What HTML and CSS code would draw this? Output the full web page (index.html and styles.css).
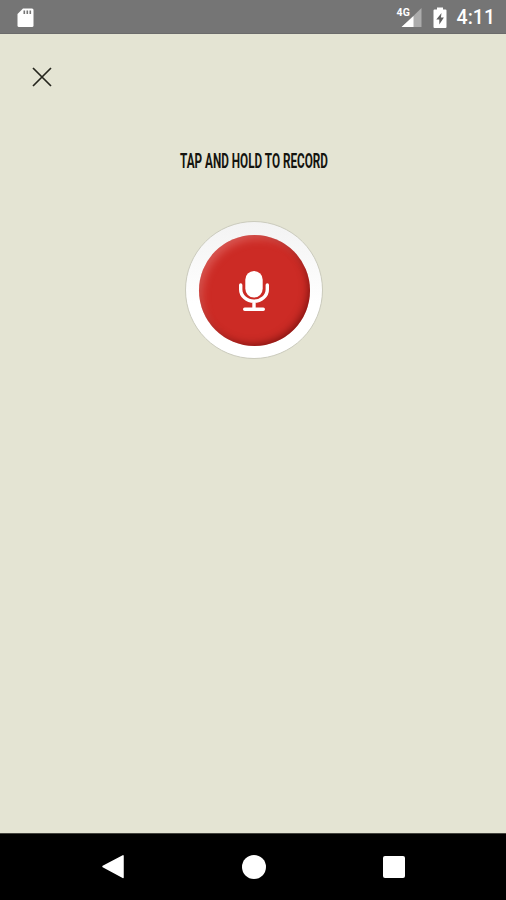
FILE: index.html
```html
<!DOCTYPE html>
<html lang="en">
<head>
<meta charset="UTF-8">
<meta name="viewport" content="width=device-width, initial-scale=1.0">
<title>Record</title>
<link rel="stylesheet" href="styles.css">
</head>
<body>
<div class="phone">
    <header class="status-bar">
        <svg class="sd-card" width="17" height="20" viewBox="0 0 17 20">
            <path fill="#fff" d="M6 0.500h9a1.500 1.500 0 0 1 1.500 1.500v15.500a1.500 1.500 0 0 1-1.500 1.500H2a1.500 1.500 0 0 1-1.500-1.500V6z"/>
            <path stroke="#757575" stroke-width="1.600" d="M7.300 2.500v3.500M10.300 2.500v3.500M13.300 2.500v3.500"/>
        </svg>
        <div class="signal">
            <span class="network">4G</span>
            <svg width="21" height="20" viewBox="0 0 21 20">
                <path fill="#acacac" d="M20.500 0v19H1z"/>
                <path fill="#fff" d="M12.500 8v11H0.500z"/>
            </svg>
        </div>
        <svg class="battery" width="14" height="22" viewBox="0 0 14 22">
            <path fill="#fff" d="M4 0.500h6v2h2.500q1 0 1 1V20q0 1-1 1h-11q-1 0-1-1V3.500q0-1 1-1H4z"/>
            <path fill="#606060" d="M8.500 6L3.300 12.500h3V17.500l4.600-7H7.900z"/>
        </svg>
        <span class="clock">4:11</span>
    </header>

    <main class="screen">
        <button class="close" aria-label="Close">
            <svg width="20" height="20" viewBox="0 0 20 20">
                <path d="M1 1l18 18M19 1L1 19" stroke="#25251d" stroke-width="1.700"/>
            </svg>
        </button>
        <svg class="hint" width="150" height="28" viewBox="0 0 150 28">
            <text x="1" y="20.800" textLength="148" lengthAdjust="spacingAndGlyphs">TAP AND HOLD TO RECORD</text>
        </svg>
        <button class="record" aria-label="Record">
            <span class="record-inner">
                <svg width="32" height="44" viewBox="0 0 32 44">
                    <rect x="7.300" y="2" width="17.400" height="26.500" rx="8.700" fill="#fff"/>
                    <path d="M2.700 16v4.500a13.300 11.800 0 0 0 26.600 0V16M16 33v7M6.700 40.300h18.600" fill="none" stroke="#fff" stroke-width="3.400" stroke-linecap="round"/>
                </svg>
            </span>
        </button>
    </main>

    <nav class="nav-bar">
        <svg width="24" height="26" viewBox="0 0 24 26">
            <path d="M2 12.500L22 1.800v21.600z" fill="#fff" stroke="#fff" stroke-width="1.500" stroke-linejoin="round"/>
        </svg>
        <span class="home"></span>
        <span class="recent"></span>
    </nav>
</div>
</body>
</html>
```

FILE: styles.css
```css
body {
    margin: 0;
    font-family: Roboto, Arial, sans-serif;
}
button {
    padding: 0;
    border: 0;
    background: none;
    cursor: pointer;
}
svg {
    display: block;
}
.phone {
    display: flex;
    flex-direction: column;
    height: 900px;
    background-color: #e4e4d3;
}
.status-bar {
    display: flex;
    align-items: center;
    box-sizing: border-box;
    height: 34px;
    padding: 0 11px 0 17px;
    background-color: #757575;
    border-bottom: 1px solid #6b6b6b;
    color: #fff;
}
.sd-card {
    margin-right: auto;
    margin-top: 2px;
}
.signal {
    display: flex;
    margin-right: 11px;
    padding-top: 2px;
}
.network {
    width: 4px;
    height: 10px;
    font-size: 10.5px;
    font-weight: 700;
    line-height: 10px;
    position: relative;
    z-index: 1;
}
.battery {
    margin-right: 10px;
    margin-top: 2px;
}
.clock {
    font-size: 19.5px;
    font-weight: 500;
    line-height: 34px;
    padding-top: 3px;
}
.screen {
    display: flex;
    flex: 1;
    flex-direction: column;
    align-items: center;
}
.close {
    align-self: flex-start;
    margin: 33px 0 0 32px;
}
.hint {
    margin: 60px 0 46px 2px;
    overflow: visible;
    font-size: 19.5px;
    font-weight: 700;
    fill: #14140f;
}
.record {
    display: flex;
    align-items: center;
    justify-content: center;
    box-sizing: border-box;
    width: 138px;
    height: 138px;
    margin-left: 2px;
    border: 1px solid #cbcbbd;
    border-radius: 50%;
    background: linear-gradient(#f3f3f3, #fff 60%);
}
.record-inner {
    display: flex;
    align-items: center;
    justify-content: center;
    width: 111px;
    height: 111px;
    border-radius: 50%;
    background-color: #cc2b25;
    box-shadow: inset -3px -3px 9px -2px rgba(70, 0, 0, 0.6), inset 5px 6px 10px -3px rgba(255, 190, 185, 0.35);
}
.record-inner svg {
    margin-top: 1px;
}
.nav-bar {
    display: flex;
    align-items: center;
    justify-content: space-between;
    box-sizing: border-box;
    height: 67px;
    padding: 0 101px;
    border-top: 1px solid #44443e;
    background-color: #000;
}
.home {
    width: 24px;
    height: 24px;
    border-radius: 50%;
    background-color: #fff;
}
.recent {
    width: 22px;
    height: 22px;
    border-radius: 2px;
    background-color: #fff;
}
```
